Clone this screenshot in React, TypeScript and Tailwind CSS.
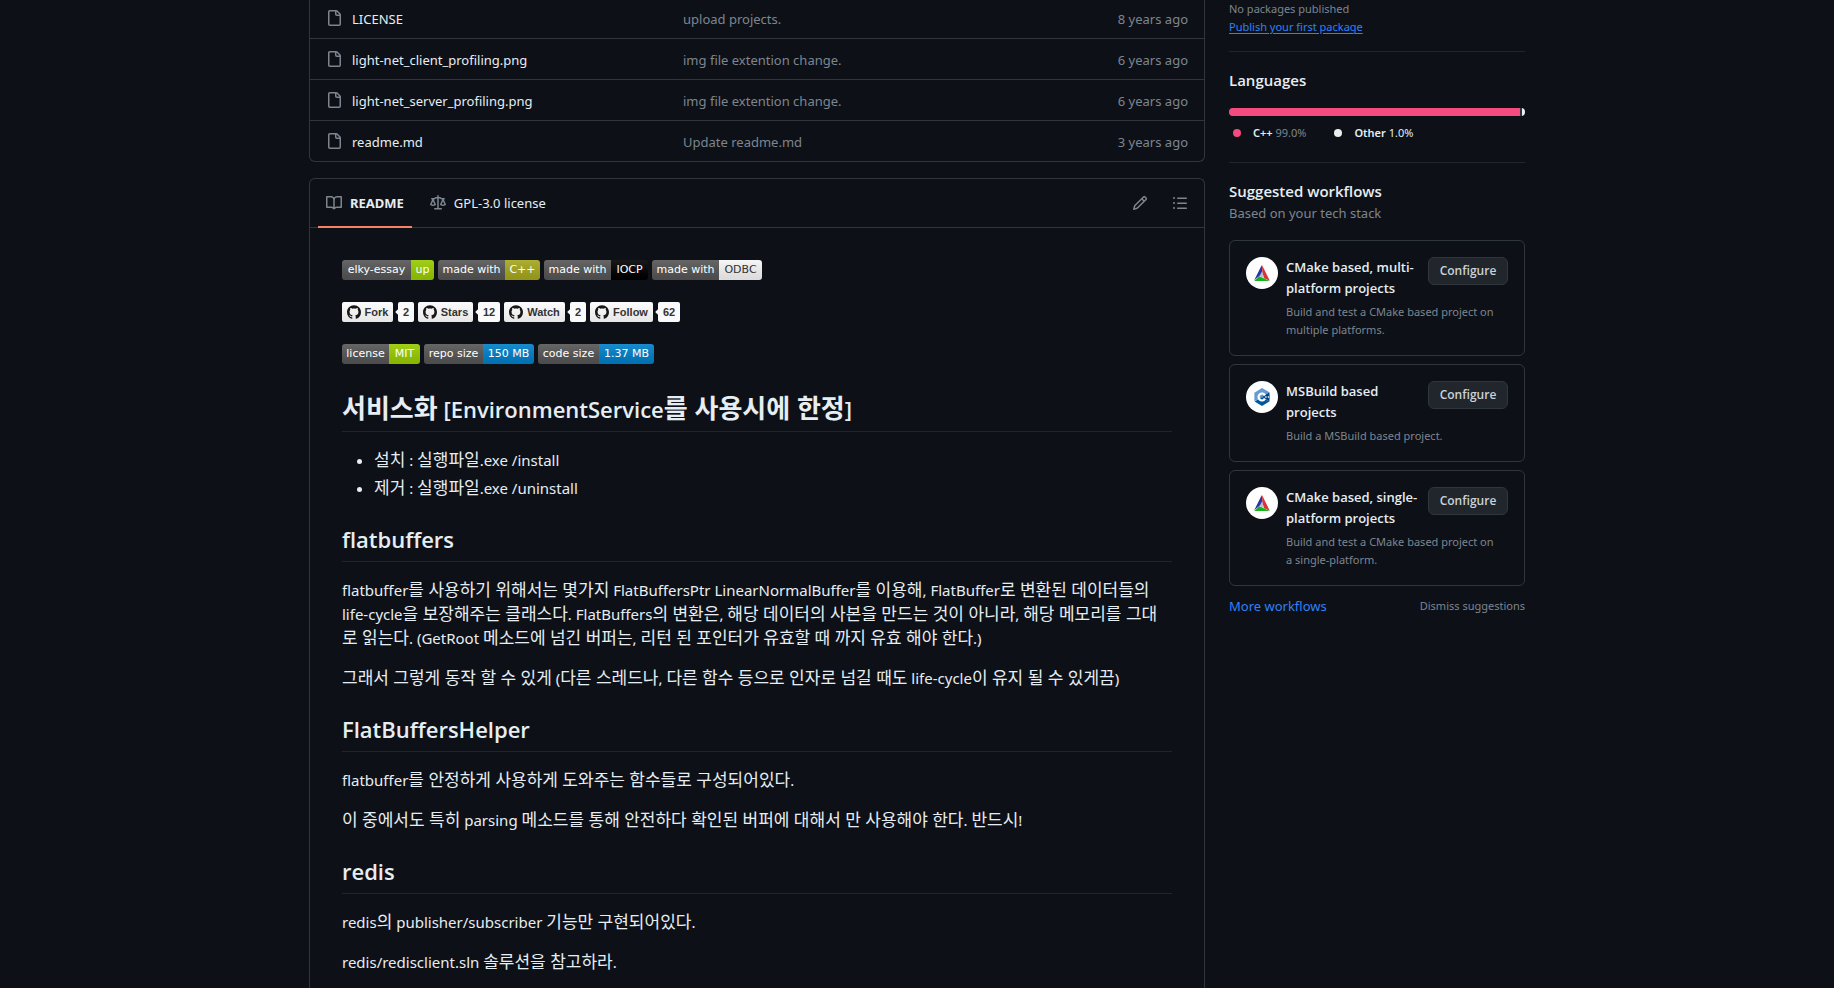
import React from "react";

/* ---------- icons ---------- */

const icons = {
  file: "M2 1.75C2 .784 2.784 0 3.75 0h6.586c.464 0 .909.184 1.237.513l2.914 2.914c.329.328.513.773.513 1.237v9.586A1.75 1.75 0 0 1 13.25 16h-9.5A1.75 1.75 0 0 1 2 14.25Zm1.75-.25a.25.25 0 0 0-.25.25v12.5c0 .138.112.25.25.25h9.5a.25.25 0 0 0 .25-.25V6h-2.75A1.75 1.75 0 0 1 9 4.25V1.5Zm6.75.062V4.25c0 .138.112.25.25.25h2.688l-.011-.013-2.914-2.914-.013-.011Z",
  book: "M0 1.75A.75.75 0 0 1 .75 1h4.253c1.227 0 2.317.59 3 1.501A3.743 3.743 0 0 1 11.006 1h4.245a.75.75 0 0 1 .75.75v10.5a.75.75 0 0 1-.75.75h-4.507a2.25 2.25 0 0 0-1.591.659l-.622.621a.75.75 0 0 1-1.06 0l-.622-.621A2.25 2.25 0 0 0 5.258 13H.75a.75.75 0 0 1-.75-.75Zm7.251 10.324.004-5.073-.002-2.253A2.25 2.25 0 0 0 5.003 2.5H1.5v9h3.757a3.75 3.75 0 0 1 1.994.574ZM8.755 4.75l-.004 7.322a3.752 3.752 0 0 1 1.992-.572H14.5v-9h-3.495a2.25 2.25 0 0 0-2.25 2.25Z",
  law: "M8.75.75V2h.985c.304 0 .603.08.867.231l1.29.736c.038.022.08.033.124.033h2.234a.75.75 0 0 1 0 1.5h-.427l2.111 4.692a.75.75 0 0 1-.154.838l-.53-.53.529.531-.001.002-.002.002-.006.006-.006.005-.01.01-.045.04c-.21.176-.441.327-.686.45C14.556 10.78 13.88 11 13 11a4.498 4.498 0 0 1-2.023-.454 3.544 3.544 0 0 1-.686-.45l-.045-.04-.016-.015-.006-.006-.004-.004v-.001a.75.75 0 0 1-.154-.838L12.178 4.5h-.162c-.305 0-.604-.079-.868-.231l-1.29-.736a.245.245 0 0 0-.124-.033H8.75V13h2.5a.75.75 0 0 1 0 1.5h-6.5a.75.75 0 0 1 0-1.5h2.5V3.5h-.984a.245.245 0 0 0-.124.033l-1.289.737c-.265.15-.564.23-.869.23h-.162l2.112 4.692a.75.75 0 0 1-.154.838l-.53-.53.529.531-.001.002-.002.002-.006.006-.016.015-.045.04c-.21.176-.441.327-.686.45C4.556 10.78 3.88 11 3 11a4.498 4.498 0 0 1-2.023-.454 3.544 3.544 0 0 1-.686-.45l-.045-.04-.016-.015-.006-.006-.004-.004v-.001a.75.75 0 0 1-.154-.838L2.178 4.5H1.75a.75.75 0 0 1 0-1.5h2.234a.249.249 0 0 0 .125-.033l1.288-.737c.265-.15.564-.23.869-.23h.984V.75a.75.75 0 0 1 1.5 0Zm2.945 8.477c.285.135.718.273 1.305.273s1.02-.138 1.305-.273L13 6.327Zm-10 0c.285.135.718.273 1.305.273s1.02-.138 1.305-.273L3 6.327Z",
  pencil: "M11.013 1.427a1.75 1.75 0 0 1 2.474 0l1.086 1.086a1.75 1.75 0 0 1 0 2.474l-8.61 8.61c-.21.21-.47.364-.756.445l-3.251.93a.75.75 0 0 1-.927-.928l.929-3.25c.081-.286.235-.547.445-.758l8.61-8.61Zm.176 4.823L9.75 4.81l-6.286 6.287a.253.253 0 0 0-.064.108l-.558 1.953 1.953-.558a.253.253 0 0 0 .108-.064Zm1.238-3.763a.25.25 0 0 0-.354 0L10.811 3.75l1.439 1.44 1.263-1.263a.25.25 0 0 0 0-.354Z",
  list: "M5.75 2.5h8.5a.75.75 0 0 1 0 1.5h-8.5a.75.75 0 0 1 0-1.5Zm0 5h8.5a.75.75 0 0 1 0 1.5h-8.5a.75.75 0 0 1 0-1.5Zm0 5h8.5a.75.75 0 0 1 0 1.5h-8.5a.75.75 0 0 1 0-1.5ZM2 14a1 1 0 1 1 0-2 1 1 0 0 1 0 2Zm1-6a1 1 0 1 1-2 0 1 1 0 0 1 2 0ZM2 4a1 1 0 1 1 0-2 1 1 0 0 1 0 2Z",
};

function Icon({ name }: { name: keyof typeof icons }) {
  return (
    <svg viewBox="0 0 16 16" className="size-4 shrink-0 fill-[#7d8590]" aria-hidden="true">
      <path d={icons[name]} />
    </svg>
  );
}

function GitHubMark() {
  return (
    <svg viewBox="0 0 24 24" className="size-3.5 shrink-0 fill-[#181717]" aria-hidden="true">
      <path d="M12 .297c-6.63 0-12 5.373-12 12 0 5.303 3.438 9.8 8.205 11.385.6.113.82-.258.82-.577 0-.285-.01-1.04-.015-2.04-3.338.724-4.042-1.61-4.042-1.61C4.422 18.07 3.633 17.7 3.633 17.7c-1.087-.744.084-.729.084-.729 1.205.084 1.838 1.236 1.838 1.236 1.07 1.835 2.809 1.305 3.495.998.108-.776.417-1.305.76-1.605-2.665-.3-5.466-1.332-5.466-5.93 0-1.31.465-2.38 1.235-3.22-.135-.303-.54-1.523.105-3.176 0 0 1.005-.322 3.3 1.23.96-.267 1.98-.399 3-.405 1.02.006 2.04.138 3 .405 2.28-1.552 3.285-1.23 3.285-1.23.645 1.653.24 2.873.12 3.176.765.84 1.23 1.91 1.23 3.22 0 4.61-2.805 5.625-5.475 5.92.42.36.81 1.096.81 2.22 0 1.606-.015 2.896-.015 3.286 0 .315.21.69.825.57C20.565 22.092 24 17.592 24 12.297c0-6.627-5.373-12-12-12" />
    </svg>
  );
}

function CMakeLogo() {
  return (
    <svg viewBox="0 0 16 16" className="size-4" aria-hidden="true">
      <path d="M7.8 0 8.5 8.4.2 15.2Z" fill="#2a35a8" />
      <path d="M8 0 15.8 15.8 10 13.2 8.3 7Z" fill="#dd3236" />
      <path d="M.2 15.9 5.4 11.3 15.6 15.9Z" fill="#14b51c" />
      <path d="M8.1 6.2 9.9 13.2 5.6 11.1Z" fill="#b9bcc6" />
    </svg>
  );
}

function CppLogo() {
  return (
    <svg viewBox="0 0 16 18" className="h-[18px] w-4" aria-hidden="true">
      <path d="M8 0 15.4 4.2 8 9 .4 13.2V4.8Z" fill="#659ad2" />
      <path d="M.6 13.4 8 9 15.4 13.4 8 18Z" fill="#00599c" />
      <path d="M15.4 4.2Q16 9 15.4 13.4L8 9Z" fill="#004482" />
      <path d="M11.9 6.8A4.5 4.5 0 1 0 11.9 11.2L9.9 10.1A2.2 2.2 0 1 1 9.9 7.9Z" fill="#fff" />
      <path d="M10.7 9H13M11.85 7.9V10.1M13.4 9H15.6M14.5 7.9V10.1" stroke="#fff" strokeWidth=".6" />
    </svg>
  );
}

/* ---------- files ---------- */

const files = [
  { name: "LICENSE", message: "upload projects.", age: "8 years ago" },
  { name: "light-net_client_profiling.png", message: "img file extention change.", age: "6 years ago" },
  { name: "light-net_server_profiling.png", message: "img file extention change.", age: "6 years ago" },
  { name: "readme.md", message: "Update readme.md", age: "3 years ago" },
];

function FileTable() {
  return (
    <div className="rounded-b-md border border-t-0 border-[#30363d]">
      <table className="w-full table-fixed text-left text-[13px] leading-5">
        <tbody>
          {files.map((file, i) => (
            <tr key={file.name} className={i === 0 ? "h-[38px] [&>td]:pb-0.5" : "h-[41px] border-t border-[#30363d]"}>
              <td className="w-[373px] pl-4">
                <span className="flex items-center gap-2.5">
                  <Icon name="file" />
                  <a href="#" className="pt-0.5 text-[#e6edf3]">{file.name}</a>
                </span>
              </td>
              <td>
                <a href="#" className="block pt-0.5 text-[#7d8590]">{file.message}</a>
              </td>
              <td className="w-34 pr-4 text-right text-[#7d8590]">
                <span className="block pt-0.5">{file.age}</span>
              </td>
            </tr>
          ))}
        </tbody>
      </table>
    </div>
  );
}

/* ---------- badges ---------- */

type Shield = { label: string; value: string; labelWidth: string; valueStyle: string };

const techShields: Shield[] = [
  { label: "elky-essay", value: "up", labelWidth: "w-[69px]", valueStyle: "w-[23px] bg-[#97ca00] text-white" },
  { label: "made with", value: "C++", labelWidth: "w-[67px]", valueStyle: "w-[35px] bg-[#a4a61d] text-white" },
  { label: "made with", value: "IOCP", labelWidth: "w-[67px]", valueStyle: "w-[37px] bg-black text-white" },
  { label: "made with", value: "ODBC", labelWidth: "w-[67px]", valueStyle: "w-[43px] bg-[#f5f5f5] text-[#333333]" },
];

const repoShields: Shield[] = [
  { label: "license", value: "MIT", labelWidth: "w-[47px]", valueStyle: "w-[31px] bg-[#97ca00] text-white" },
  { label: "repo size", value: "150 MB", labelWidth: "w-[59px]", valueStyle: "w-[51px] bg-[#007ec6] text-white" },
  { label: "code size", value: "1.37 MB", labelWidth: "w-[61px]", valueStyle: "w-[55px] bg-[#007ec6] text-white" },
];

function ShieldRow({ shields }: { shields: Shield[] }) {
  return (
    <div className="flex gap-1 font-['DejaVu_Sans',sans-serif] text-[11px] leading-5">
      {shields.map((s, i) => (
        <a key={i} href="#" className="flex h-5 overflow-hidden rounded-[3px] whitespace-nowrap">
          <span className={`flex justify-center bg-[#555555] bg-linear-to-b from-white/10 to-black/10 text-white ${s.labelWidth}`}>
            {s.label}
          </span>
          <span className={`flex justify-center bg-linear-to-b from-white/10 to-black/10 ${s.valueStyle}`}>
            {s.value}
          </span>
        </a>
      ))}
    </div>
  );
}

const socials = [
  { label: "Fork", count: "2", width: "w-[51px]", countWidth: "w-4" },
  { label: "Stars", count: "12", width: "w-[55px]", countWidth: "w-[22px]" },
  { label: "Watch", count: "2", width: "w-[61px]", countWidth: "w-4" },
  { label: "Follow", count: "62", width: "w-[63px]", countWidth: "w-[22px]" },
];

function SocialRow() {
  return (
    <div className="flex gap-1 font-['Liberation_Sans',sans-serif] text-[11px] leading-5 font-bold text-[#333333]">
      {socials.map((s) => (
        <a key={s.label} href="#" className="flex h-5 gap-[5px]">
          <span className={`flex items-center justify-center gap-1 rounded-xs bg-linear-to-b from-[#fcfcfc] to-[#e6e6e6] ${s.width}`}>
            <GitHubMark />
            {s.label}
          </span>
          <span className={`relative flex justify-center rounded-xs bg-[#fafafa] ${s.countWidth}`}>
            <span className="absolute top-2 -left-0.5 size-1 rotate-45 bg-[#fafafa]" />
            {s.count}
          </span>
        </a>
      ))}
    </div>
  );
}

/* ---------- readme text ---------- */

/* Hangul is set a little larger than the Latin text it stands in. */
function Mixed({ text, hangul }: { text: string; hangul: string }) {
  const runs = text.split(/([\uac00-\ud7a3]+(?:\s+[\uac00-\ud7a3]+)*)/);
  return (
    <>
      {runs.map((run, i) =>
        i % 2 ? <span key={i} className={`leading-none ${hangul}`}>{run}</span> : run
      )}
    </>
  );
}

function Heading({ text }: { text: string }) {
  return (
    <h2 className="mt-6 border-b border-[#21262d] pb-[7px] font-['Open_Sans','Noto_Sans_CJK_KR',sans-serif] text-[22px] leading-[30px] font-semibold">
      <Mixed text={text} hangul="text-[26px]" />
    </h2>
  );
}

function Paragraph({ lines }: { lines: string[] }) {
  return (
    <p className="mt-4">
      {lines.map((line, i) => (
        <React.Fragment key={i}>
          {i > 0 && <br />}
          <Mixed text={line} hangul="text-[17px]" />
        </React.Fragment>
      ))}
    </p>
  );
}

function Readme() {
  return (
    <section className="flex grow flex-col rounded-t-md border border-b-0 border-[#30363d]">
      <header className="flex h-[49px] items-center justify-between border-b border-[#30363d] px-2">
        <nav className="flex gap-2.5 self-stretch text-[13px] leading-5">
          <a href="#" className="-mb-px flex items-center gap-2 border-b-2 border-[#f78166] px-2 font-bold">
            <Icon name="book" />
            README
          </a>
          <a href="#" className="flex items-center gap-2 px-2">
            <Icon name="law" />
            GPL-3.0 license
          </a>
        </nav>
        <div className="flex gap-2">
          <button aria-label="Edit file" className="grid size-8 place-items-center">
            <Icon name="pencil" />
          </button>
          <button aria-label="Outline" className="grid size-8 place-items-center">
            <Icon name="list" />
          </button>
        </div>
      </header>
      <article className="p-8 text-[15px] leading-6">
        <div className="flex flex-col gap-[22px] pb-1.5">
          <ShieldRow shields={techShields} />
          <SocialRow />
          <ShieldRow shields={repoShields} />
        </div>
        <Heading text="서비스화 [EnvironmentService를 사용시에 한정]" />
        <ul className="mt-4 flex list-disc flex-col gap-1 pl-8">
          <li><Mixed text="설치 : 실행파일.exe /install" hangul="text-[17px]" /></li>
          <li><Mixed text="제거 : 실행파일.exe /uninstall" hangul="text-[17px]" /></li>
        </ul>
        <Heading text="flatbuffers" />
        <Paragraph
          lines={[
            "flatbuffer를 사용하기 위해서는 몇가지 FlatBuffersPtr LinearNormalBuffer를 이용해, FlatBuffer로 변환된 데이터들의",
            "life-cycle을 보장해주는 클래스다. FlatBuffers의 변환은, 해당 데이터의 사본을 만드는 것이 아니라, 해당 메모리를 그대",
            "로 읽는다. (GetRoot 메소드에 넘긴 버퍼는, 리턴 된 포인터가 유효할 때 까지 유효 해야 한다.)",
          ]}
        />
        <Paragraph lines={["그래서 그렇게 동작 할 수 있게 (다른 스레드나, 다른 함수 등으로 인자로 넘길 때도 life-cycle이 유지 될 수 있게끔)"]} />
        <Heading text="FlatBuffersHelper" />
        <Paragraph lines={["flatbuffer를 안정하게 사용하게 도와주는 함수들로 구성되어있다."]} />
        <Paragraph lines={["이 중에서도 특히 parsing 메소드를 통해 안전하다 확인된 버퍼에 대해서 만 사용해야 한다. 반드시!"]} />
        <Heading text="redis" />
        <Paragraph lines={["redis의 publisher/subscriber 기능만 구현되어있다."]} />
        <Paragraph lines={["redis/redisclient.sln 솔루션을 참고하라."]} />
      </article>
    </section>
  );
}

/* ---------- sidebar ---------- */

const workflows = [
  {
    title: "CMake based, multi-platform projects",
    text: "Build and test a CMake based project on multiple platforms.",
    logo: <CMakeLogo />,
  },
  { title: "MSBuild based projects", text: "Build a MSBuild based project.", logo: <CppLogo /> },
  {
    title: "CMake based, single-platform projects",
    text: "Build and test a CMake based project on a single-platform.",
    logo: <CMakeLogo />,
  },
];

function Sidebar() {
  return (
    <aside className="w-[296px] shrink-0 text-[11px] leading-[18px]">
      <section className="border-b border-[#21262d] pb-[15px]">
        <p className="text-[#7d8590]">No packages published</p>
        <a href="#" className="block text-[#2f81f7] underline underline-offset-2">Publish your first package</a>
      </section>

      <section className="border-b border-[#21262d] pt-4 pb-5">
        <h2 className="font-['Open_Sans',sans-serif] text-[15px] leading-6 font-semibold">Languages</h2>
        <div className="mt-4 flex h-2 gap-0.5 overflow-hidden rounded-md bg-[#30363d]">
          <span className="grow bg-[#f34b7d]" />
          <span className="w-[3px] bg-[#ededed]" />
        </div>
        <ul className="mt-2 flex gap-6">
          <li className="flex items-center gap-2">
            <span className="flex w-4 justify-center"><span className="size-2 rounded-full bg-[#f34b7d]" /></span>
            <span><b className="font-semibold">C++</b> <span className="text-[#7d8590]">99.0%</span></span>
          </li>
          <li className="flex items-center gap-2">
            <span className="flex w-4 justify-center"><span className="size-2 rounded-full bg-[#ededed]" /></span>
            <span><b className="font-semibold">Other</b> 1.0%</span>
          </li>
        </ul>
      </section>

      <section className="pt-4">
        <h2 className="font-['Open_Sans',sans-serif] text-[15px] leading-6 font-semibold">Suggested workflows</h2>
        <p className="text-[13px] leading-[21px] text-[#7d8590]">Based on your tech stack</p>
        <div className="mt-4 flex flex-col gap-2">
          {workflows.map((w) => (
            <div key={w.title} className="flex gap-2 rounded-md border border-[#30363d] p-4">
              <span className="grid size-8 shrink-0 place-items-center rounded-full bg-white">{w.logo}</span>
              <div className="grow">
                <div className="flex items-start justify-between gap-1">
                  <h3 className="font-['Open_Sans',sans-serif] text-[13px] leading-[21px] font-semibold">{w.title}</h3>
                  <button className="h-7 w-20 shrink-0 rounded-md border border-[#30363d] bg-[#21262d] text-center font-['Open_Sans',sans-serif] text-[12px] leading-5 font-semibold text-[#c9d1d9]">
                    Configure
                  </button>
                </div>
                <p className="mt-1 pr-2 text-[#7d8590]">{w.text}</p>
              </div>
            </div>
          ))}
        </div>
        <div className="mt-2 flex items-center justify-between">
          <a href="#" className="text-[13px] leading-6 text-[#2f81f7]">More workflows</a>
          <button className="text-[#7d8590]">Dismiss suggestions</button>
        </div>
      </section>
    </aside>
  );
}

export default function App() {
  return (
    <div className="min-h-screen bg-[#0d1117] font-['Noto_Sans','Noto_Sans_CJK_KR',sans-serif] text-[#e6edf3]">
      <div className="mx-auto flex min-h-screen max-w-[1280px] gap-6 px-8">
        <main className="flex min-w-0 grow flex-col gap-4">
          <FileTable />
          <Readme />
        </main>
        <Sidebar />
      </div>
    </div>
  );
}
